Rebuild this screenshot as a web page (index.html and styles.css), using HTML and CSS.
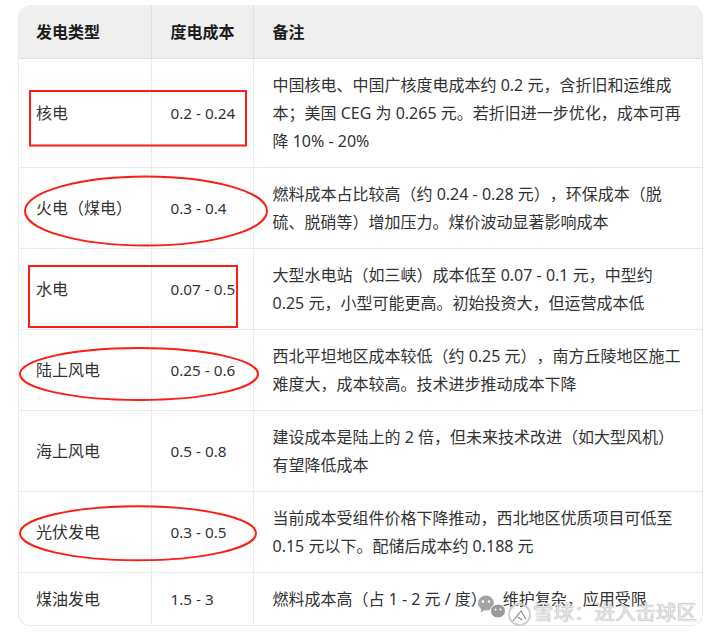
FILE: index.html
```html
<!DOCTYPE html>
<html lang="zh-CN">
<head>
<meta charset="utf-8">
<title>发电成本</title>
<link rel="stylesheet" href="styles.css">
</head>
<body>
<div class="wrap">
  <table class="cost">
    <colgroup><col class="c1"><col class="c2"><col></colgroup>
    <thead>
      <tr><th>发电类型</th><th>度电成本</th><th>备注</th></tr>
    </thead>
    <tbody>
      <tr><td>核电</td><td>0.2 - 0.24</td><td>中国核电、中国广核度电成本约 0.2 元，含折旧和运维成本；美国 CEG 为 0.265 元。若折旧进一步优化，成本可再降 10% - 20%</td></tr>
      <tr><td>火电（煤电）</td><td>0.3 - 0.4</td><td>燃料成本占比较高（约 0.24 - 0.28 元），环保成本（脱硫、脱硝等）增加压力。煤价波动显著影响成本</td></tr>
      <tr><td>水电</td><td>0.07 - 0.5</td><td>大型水电站（如三峡）成本低至 0.07 - 0.1 元，中型约 0.25 元，小型可能更高。初始投资大，但运营成本低</td></tr>
      <tr><td>陆上风电</td><td>0.25 - 0.6</td><td>西北平坦地区成本较低（约 0.25 元），南方丘陵地区施工难度大，成本较高。技术进步推动成本下降</td></tr>
      <tr><td>海上风电</td><td>0.5 - 0.8</td><td>建设成本是陆上的 2 倍，但未来技术改进（如大型风机）有望降低成本</td></tr>
      <tr><td>光伏发电</td><td>0.3 - 0.5</td><td>当前成本受组件价格下降推动，西北地区优质项目可低至 0.15 元以下。配储后成本约 0.188 元</td></tr>
      <tr><td>煤油发电</td><td>1.5 - 3</td><td>燃料成本高（占 1 - 2 元 / 度），维护复杂，应用受限</td></tr>
    </tbody>
  </table>
</div>
<svg class="marks" width="720" height="637" viewBox="0 0 720 637" aria-hidden="true">
  <g fill="none" stroke="#fa1e14" stroke-width="2">
    <rect x="30" y="91" width="216" height="54.5"/>
    <rect x="29" y="266" width="208" height="61"/>
    <ellipse cx="146" cy="211" rx="121" ry="34.5"/>
    <ellipse cx="139" cy="374" rx="119" ry="26"/>
    <ellipse cx="138" cy="533.3" rx="118" ry="27"/>
  </g>
</svg>
<div class="mark">
  <svg class="wechat" width="28" height="24" viewBox="0 0 28 24" aria-hidden="true">
    <ellipse cx="8" cy="8" rx="8" ry="7.5" fill="#a3a3a3"/>
    <path d="M3.5 13 l-1 4.5 l5 -3z" fill="#a3a3a3"/>
    <ellipse cx="20" cy="16" rx="7.5" ry="7" fill="#9a9a9a" stroke="#fff"/>
    <g fill="#fff"><circle cx="5" cy="6.5" r="1.2"/><circle cx="11" cy="6.5" r="1.2"/><circle cx="17.5" cy="14.5" r="1"/><circle cx="22.5" cy="14.5" r="1"/></g>
  </svg>
  <svg class="ball" width="25" height="25" viewBox="0 0 25 25" aria-hidden="true">
    <circle cx="12.5" cy="12.5" r="10.5" fill="none" stroke="#d0d0d0" stroke-width="2"/>
    <path d="M6 19 L14 9 L19 17 M11 15 L15 18" fill="none" stroke="#8a8a8a" stroke-width="1.2"/>
  </svg>
  <span class="mark-text">雪球：进入击球区</span>
</div>
</body>
</html>
```
FILE: styles.css
```css
html, body {
  margin: 0;
  padding: 0;
  background: #fff;
}
body {
  width: 720px;
  height: 637px;
  position: relative;
  overflow: hidden;
  font-family: "Noto Sans", "Noto Sans CJK SC", sans-serif;
  text-spacing-trim: space-all;
}
.wrap {
  margin: 5px 17px 0 18px;
  border: 1px solid #ebebeb;
  border-top: 0;
  border-radius: 12px;
  overflow: hidden;
}
.cost {
  width: 100%;
  table-layout: fixed;
  border-collapse: collapse;
  font-size: 16px;
  line-height: 28px;
  color: #333;
}
.c1 { width: 132px; }
.c2 { width: 102px; }
.cost th {
  padding: 13px 18px 12px 19px;
  text-align: left;
  font-weight: 700;
  color: #1c1c1c;
  background: #efefef;
  border-bottom: 1px solid #dedede;
  border-left: 1px solid #e0e0e0;
}
.cost td {
  padding: 12px 17px 12px 19px;
  vertical-align: middle;
  border-top: 1px solid #ebebeb;
  border-left: 1px solid #ebebeb;
}
.cost td:nth-child(2) { padding-right: 6px; font-size: 15.3px; }
.cost th:first-child, .cost td:first-child { border-left: 0; padding-left: 17px; }
.cost tbody tr:first-child td { border-top: 0; }
.marks {
  position: absolute;
  left: 0;
  top: 0;
}
.mark {
  position: absolute;
  left: 478px;
  top: 595px;
  display: flex;
  align-items: flex-start;
  gap: 1px;
}
.ball { margin-top: 7px; }
.mark-text {
  font-size: 20.5px;
  line-height: 28px;
  margin-top: 3px;
  color: #e6e6e6;
  text-shadow: 0 0 1px #808080;
  white-space: nowrap;
}
```
